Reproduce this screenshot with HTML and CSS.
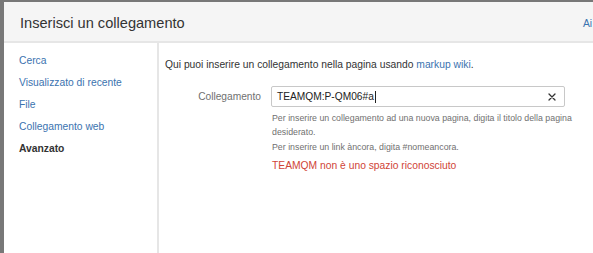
FILE: index.html
```html
<!DOCTYPE html>
<html lang="it">
<head>
<meta charset="utf-8">
<title>Inserisci un collegamento</title>
<link rel="stylesheet" href="styles.css">
</head>
<body>
<div class="backdrop">
  <div class="dialog">
    <div class="header">
      <h2 class="title">Inserisci un collegamento</h2>
      <a class="help-link" href="#">Ai</a>
    </div>
    <div class="body">
      <nav class="sidebar">
        <a class="nav-item" href="#">Cerca</a>
        <a class="nav-item" href="#">Visualizzato di recente</a>
        <a class="nav-item" href="#">File</a>
        <a class="nav-item" href="#">Collegamento web</a>
        <span class="nav-item active">Avanzato</span>
      </nav>
      <main class="panel">
        <p class="intro">Qui puoi inserire un collegamento nella pagina usando <a href="#">markup wiki</a>.</p>
        <div class="field">
          <label class="label">Collegamento</label>
          <div class="control">
            <div class="input">
              <span class="value">TEAMQM:P-QM06#a<span class="caret"></span></span>
              <svg class="clear" width="8" height="8" viewBox="0 0 8 8"><path d="M1 1L7 7M7 1L1 7" stroke="#333" stroke-width="1.3" stroke-linecap="round"/></svg>
            </div>
            <div class="help">
              <p class="hint">Per inserire un collegamento ad una nuova pagina, digita il titolo della pagina desiderato.</p>
              <p class="hint second">Per inserire un link àncora, digita #nomeancora.</p>
              <p class="error">TEAMQM non è uno spazio riconosciuto</p>
            </div>
          </div>
        </div>
      </main>
    </div>
  </div>
</div>
</body>
</html>
```
FILE: styles.css
```css
* { box-sizing: border-box; }
html, body { margin: 0; padding: 0; }
body {
  width: 593px;
  height: 253px;
  overflow: hidden;
  font-family: "Liberation Sans", Arial, sans-serif;
  color: #333;
}
.backdrop {
  background: #787878;
  height: 253px;
  padding: 2px 0 0 4px;
}
.dialog {
  background: #fff;
  width: 589px;
  height: 251px;
  display: flex;
  flex-direction: column;
  overflow: hidden;
}
.header {
  background: #f5f5f5;
  height: 41px;
  border-bottom: 2px solid #e6e6e6;
  display: flex;
  align-items: center;
  padding-left: 16px;
}
.title {
  margin: 0;
  font-size: 14.6px;
  font-weight: normal;
  color: #333;
  width: 563px;
  flex: none;
  padding-top: 2px;
}
.help-link {
  font-size: 10.3px;
  color: #3b73af;
  text-decoration: none;
  padding-top: 4px;
  white-space: nowrap;
}
.body {
  flex: 1;
  display: flex;
}
.sidebar {
  width: 155px;
  border-right: 2px solid #e6e6e6;
  padding: 7px 0 0 15px;
  display: flex;
  flex-direction: column;
}
.nav-item {
  font-size: 10.3px;
  line-height: 22px;
  color: #3b73af;
  text-decoration: none;
}
.nav-item.active {
  color: #333;
  font-weight: bold;
}
.panel {
  padding: 15px 0 0 6px;
}
.intro {
  margin: 0;
  font-size: 10.3px;
  line-height: 14px;
}
.intro a { color: #3b73af; text-decoration: none; }
.field {
  display: flex;
  gap: 10px;
  margin-top: 14px;
}
.label {
  width: 96px;
  text-align: right;
  font-size: 10.2px;
  color: #707070;
  line-height: 21px;
}
.control { width: 310px; }
.input {
  width: 294px;
  height: 21px;
  border: 1px solid #c8c8c8;
  border-radius: 2px;
  display: flex;
  align-items: center;
  justify-content: space-between;
  padding: 0 8px 0 5px;
}
.value {
  font-size: 10.2px;
  color: #222;
  display: flex;
  align-items: center;
}
.caret {
  width: 1px;
  height: 12px;
  background: #222;
  margin-left: 1px;
}
.help { padding-left: 1px; margin-top: 4px; }
.hint {
  margin: 0;
  font-size: 8.8px;
  line-height: 14px;
  color: #707070;
}
.hint.second { margin-top: 1px; }
.error {
  margin: 4px 0 0;
  font-size: 10.3px;
  line-height: 15px;
  color: #d04437;
}
```
